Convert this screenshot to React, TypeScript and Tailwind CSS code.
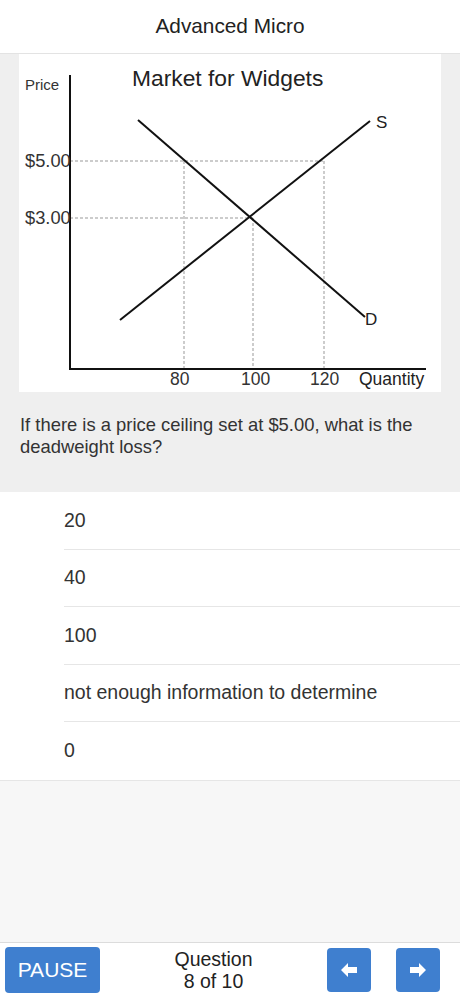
import React from 'react';

const answers = ['20', '40', '100', 'not enough information to determine', '0'];

const Chart: React.FC = () => (
  <svg width="422" height="338" viewBox="0 0 422 338" className="block" fontFamily="'Liberation Sans', Arial, sans-serif">
    <text x="6" y="36" fontSize="15" fill="#333">Price</text>
    <text x="113" y="32" fontSize="22.8" fill="#222">Market for Widgets</text>

    {/* dashed guides */}
    <g stroke="#999" strokeWidth="1" strokeDasharray="3 2">
      <line x1="51" y1="107" x2="305" y2="107" />
      <line x1="51" y1="164" x2="234" y2="164" />
      <line x1="165" y1="107" x2="165" y2="315" />
      <line x1="234" y1="164" x2="234" y2="315" />
      <line x1="305" y1="107" x2="305" y2="315" />
    </g>

    {/* axes */}
    <g stroke="#111" strokeWidth="2">
      <line x1="51" y1="21" x2="51" y2="316" />
      <line x1="50" y1="315" x2="407" y2="315" />
    </g>

    {/* curves */}
    <g stroke="#111" strokeWidth="2">
      <line x1="119" y1="66" x2="346" y2="263" />
      <line x1="101" y1="266" x2="351" y2="67" />
    </g>
    <text x="357" y="74" fontSize="17" fill="#222">S</text>
    <text x="346" y="271" fontSize="17" fill="#222">D</text>

    <text x="6" y="113" fontSize="18.3" fill="#333">$5.00</text>
    <text x="6" y="170" fontSize="18.3" fill="#333">$3.00</text>

    <text x="151" y="331" fontSize="17.5" fill="#333">80</text>
    <text x="222" y="331" fontSize="17.5" fill="#333">100</text>
    <text x="291" y="331" fontSize="17.5" fill="#333">120</text>
    <text x="340" y="331" fontSize="17.5" fill="#222">Quantity</text>
  </svg>
);

const Arrow: React.FC<{ dir: 'left' | 'right' }> = ({ dir }) => (
  <svg width="16" height="14" viewBox="0 0 16 14" className={dir === 'right' ? 'rotate-180' : ''}>
    <polygon points="0,7 7,0 7,4 16,4 16,10 7,10 7,14" fill="#fff" />
  </svg>
);

export default function App() {
  return (
    <div className="flex h-[996px] w-[460px] flex-col bg-[#f7f7f7] font-['Liberation_Sans',Arial,sans-serif]">
      <header className="flex h-[54px] shrink-0 items-center justify-center border-b border-[#e3e3e3] bg-white pb-[2px]">
        <h1 className="text-[20.8px] text-[#222]">Advanced Micro</h1>
      </header>

      <section className="shrink-0 bg-[#efefef] px-[19px] pb-[34px]">
        <div className="bg-white">
          <Chart />
        </div>
        <p className="mt-[22px] pl-[1px] text-[18.4px] leading-[22px] text-[#333]">
          If there is a price ceiling set at $5.00, what is the deadweight loss?
        </p>
      </section>

      <ul className="shrink-0 border-b border-[#e6e6e6] bg-white">
        {answers.map((a, i) => (
          <li key={i} className="pl-[64px]">
            <div
              className={`flex h-[57.5px] items-center text-[19.5px] text-[#333] ${
                i < answers.length - 1 ? 'border-b border-[#e6e6e6]' : ''
              }`}
            >
              {a}
            </div>
          </li>
        ))}
      </ul>

      <div className="flex-1" />

      <footer className="flex h-[54px] shrink-0 items-center border-t border-[#dcdcdc] bg-white pl-[5px] pr-[20px]">
        <button className="flex h-[46px] w-[95px] items-center justify-center rounded-[4px] bg-[#3f7fcf] text-[21px] text-white">
          PAUSE
        </button>
        <div className="flex-1 text-center text-[19.5px] leading-[22px] text-[#222]">
          <div>Question</div>
          <div>8 of 10</div>
        </div>
        <div className="flex items-center gap-[25px]">
          <button className="flex h-[44px] w-[44px] items-center justify-center rounded-[4px] bg-[#3f7fcf]">
            <Arrow dir="left" />
          </button>
          <button className="flex h-[44px] w-[44px] items-center justify-center rounded-[4px] bg-[#3f7fcf]">
            <Arrow dir="right" />
          </button>
        </div>
      </footer>
    </div>
  );
}
